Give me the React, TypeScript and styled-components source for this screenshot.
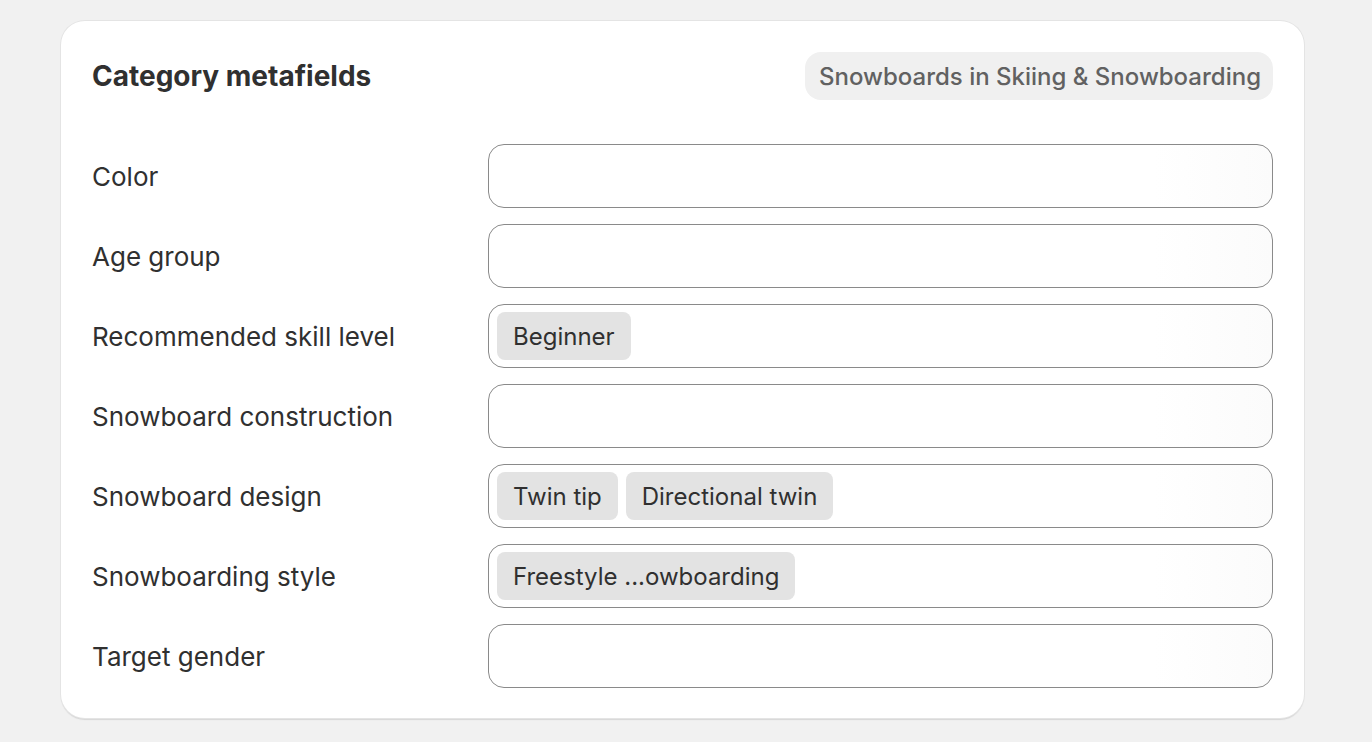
import React from 'react';
import styled, { createGlobalStyle } from 'styled-components';

const GlobalStyle = createGlobalStyle`
  html, body {
    margin: 0;
    padding: 0;
    background: #f1f1f1;
    font-family: Inter, "Noto Sans", "Liberation Sans", sans-serif;
    color: #303030;
  }
`;

const Page = styled.div`
  width: 1372px;
  height: 742px;
  padding: 21px 68px 0 61px;
  box-sizing: border-box;
`;

const Card = styled.div`
  background: #fff;
  border-radius: 24px;
  padding: 31px 31px 30px 31px;
  box-shadow:
    0 0 0 1px #e4e4e4,
    0 2px 1px 0 #d6d6d6;
`;

const Header = styled.div`
  display: flex;
  align-items: center;
  justify-content: space-between;
  height: 48px;
  margin-bottom: 44px;
`;

const Title = styled.h2`
  margin: 0;
  font-size: 28px;
  font-weight: 650;
  color: #303030;
`;

const Badge = styled.span`
  display: inline-flex;
  align-items: center;
  height: 48px;
  padding: 0 12px 0 14px;
  border-radius: 16px;
  background: #f0f0f0;
  color: #616161;
  font-size: 24px;
  font-weight: 500;
`;

const Rows = styled.div`
  display: flex;
  flex-direction: column;
  gap: 16px;
`;

const Row = styled.div`
  display: grid;
  grid-template-columns: 396px 1fr;
  align-items: center;
`;

const Label = styled.label`
  font-size: 26px;
  font-weight: 400;
  color: #303030;
`;

const Field = styled.div`
  display: flex;
  align-items: center;
  gap: 8px;
  height: 64px;
  box-sizing: border-box;
  padding: 0 8px;
  border: 1.5px solid #8a8a8a;
  border-radius: 16px;
  background: linear-gradient(90deg, #fff 85%, #fbfbfb 100%);
`;

const Tag = styled.span`
  display: inline-flex;
  align-items: center;
  height: 48px;
  padding: 0 16px;
  border-radius: 8px;
  background: #e3e3e3;
  color: #303030;
  font-size: 24px;
  font-weight: 400;
  white-space: nowrap;
`;

const fields: { label: string; tags: string[] }[] = [
  { label: 'Color', tags: [] },
  { label: 'Age group', tags: [] },
  { label: 'Recommended skill level', tags: ['Beginner'] },
  { label: 'Snowboard construction', tags: [] },
  { label: 'Snowboard design', tags: ['Twin tip', 'Directional twin'] },
  { label: 'Snowboarding style', tags: ['Freestyle ...owboarding'] },
  { label: 'Target gender', tags: [] },
];

const App = () => {
  return (
    <>
      <GlobalStyle />
      <Page>
        <Card>
          <Header>
            <Title>Category metafields</Title>
            <Badge>Snowboards in Skiing &amp; Snowboarding</Badge>
          </Header>
          <Rows>
            {fields.map((f) => (
              <Row key={f.label}>
                <Label>{f.label}</Label>
                <Field>
                  {f.tags.map((t) => (
                    <Tag key={t}>{t}</Tag>
                  ))}
                </Field>
              </Row>
            ))}
          </Rows>
        </Card>
      </Page>
    </>
  );
};

export default App;
